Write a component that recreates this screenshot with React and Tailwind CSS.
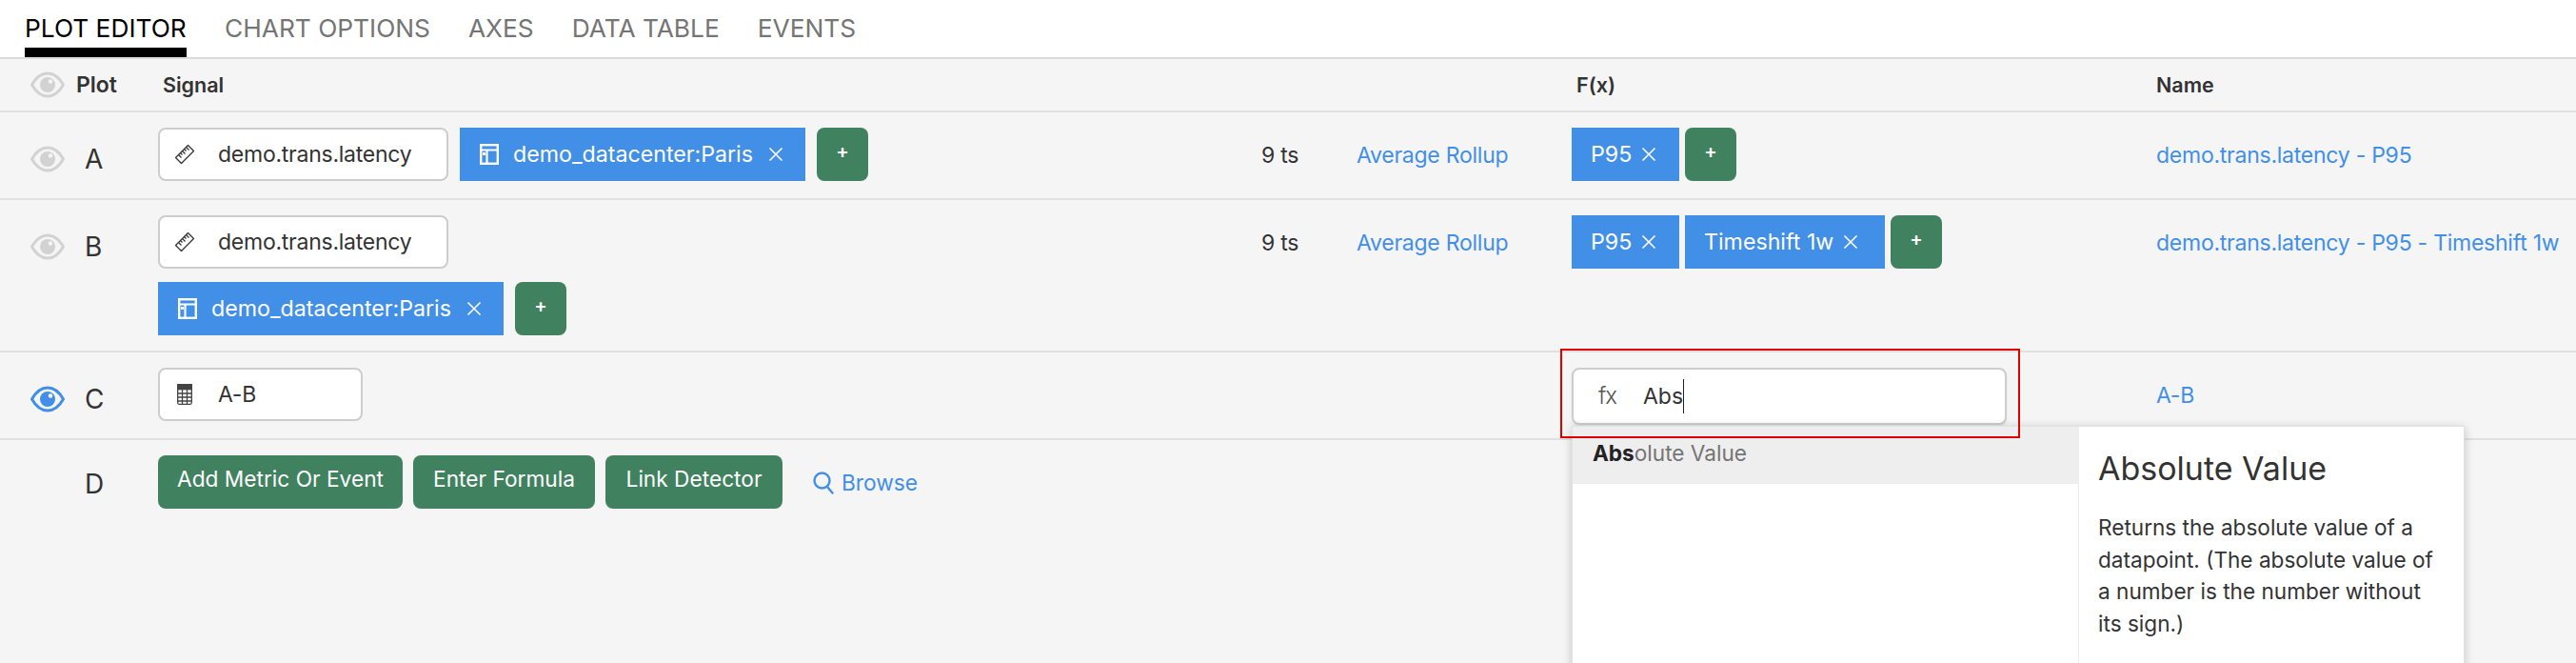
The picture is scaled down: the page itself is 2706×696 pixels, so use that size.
import React from "react";

const Eye = ({ on }) => (
  <svg width="36" height="28" viewBox="0 0 36 28" fill="none" className={on ? "text-[#428fe8]" : "text-[#d2d2d2]"}>
    <path d="M1.500 14C6 6 11.500 2 18 2s12 4 16.500 12C30 22 24.500 26 18 26S6 22 1.500 14Z" stroke="currentColor" strokeWidth="3" strokeLinejoin="round" />
    <circle cx="18" cy="14" r="8" fill="currentColor" />
    <circle cx="21" cy="10.500" r="2.200" fill={on ? "#ffffff" : "#f5f5f5"} />
  </svg>
);

const Ruler = () => (
  <svg width="22" height="22" viewBox="0 0 22 22" fill="none" stroke="#333" strokeWidth="1.300">
    <path d="M14.500 1.500 20.500 7.500 7.500 20.500 1.500 14.500Z" strokeLinejoin="round" />
    <path d="M12.500 3.500l3 3M10.500 5.500l2 2M8.500 7.500l3 3M6.500 9.500l2 2M4.500 11.500l3 3" />
  </svg>
);

const Calc = () => (
  <svg width="16" height="22" viewBox="0 0 16 22" fill="none" stroke="#444" strokeWidth="1.300">
    <rect x="0.700" y="0.700" width="14.600" height="20.600" rx="1.500" />
    <rect x="0.700" y="0.700" width="14.600" height="5" fill="#444" />
    <path d="M0.700 10h14.600M0.700 14h14.600M0.700 18h14.600M5.500 6v15M10.500 6v15" />
  </svg>
);

const TableIcon = () => (
  <svg width="20" height="22" viewBox="0 0 20 22" fill="none">
    <rect x="1.200" y="1.200" width="17.600" height="19.600" stroke="#fff" strokeWidth="2.400" />
    <path d="M1 6.500h18M7.500 6.500V21" stroke="#fff" strokeWidth="2.200" />
    <rect x="3" y="9" width="3" height="3" fill="#fff" />
  </svg>
);

const X = () => (
  <svg width="16" height="16" viewBox="0 0 16 16" className="shrink-0" stroke="#fff" strokeWidth="1.600" fill="none">
    <path d="M1.500 1.500l13 13M14.500 1.500l-13 13" />
  </svg>
);

const Plus = () => (
  <button className="h-14 w-[54px] shrink-0 rounded-[8px] bg-[#40825f] pb-1.5 text-[20px] font-semibold text-white">+</button>
);

const Tag = ({ children, icon, className = "" }) => (
  <div className={"flex h-14 shrink-0 items-center bg-[#428fe8] text-[23.200px] text-white " + className}>
    {icon}
    {children}
  </div>
);

const Box = ({ icon, children, className = "" }) => (
  <div className={"flex h-14 shrink-0 items-center rounded-[8px] border-2 border-[#cdcdcd] bg-white text-[23px] tracking-[-0.25px] text-[#333] " + className}>
    <span className="flex w-[61px] shrink-0 justify-center pl-1.5 pr-4">{icon}</span>
    {children}
  </div>
);

const Letter = ({ children, on }) => (
  <div className="flex h-14 items-center pl-8 pt-2.5">
    <Eye on={on} />
    <span className="ml-[21px] text-[28px] leading-none text-[#333]">{children}</span>
  </div>
);

const Cell = ({ children, className = "" }) => (
  <div className={"flex h-14 items-center whitespace-nowrap pt-0.5 text-[23px] tracking-[-0.25px] " + className}>{children}</div>
);

const Row = ({ children, className = "" }) => (
  <div className={"grid grid-cols-[166px_1159px_100px_226px_614px_1fr] border-b-2 border-[#e0e0e0] pt-4 " + className}>{children}</div>
);

export default function App() {
  const tabs = ["CHART OPTIONS", "AXES", "DATA TABLE", "EVENTS"];
  return (
    <div className="h-[696px] w-[2706px] overflow-hidden bg-[#f5f5f5] font-['Inter','Liberation_Sans',sans-serif]">
      <div className="flex h-[62px] gap-10 border-b-2 border-[#dcdcdc] bg-white pl-[26px] text-[26.300px] text-[#757575]">
        <div className="flex h-[60px] w-[170px] items-start whitespace-nowrap border-b-[10px] border-black pt-3.5 leading-8 text-black">PLOT EDITOR</div>
        {tabs.map((t) => (
          <div key={t} className="pt-3.5 leading-8">{t}</div>
        ))}
      </div>

      <div className="grid h-14 grid-cols-[166px_1485px_614px_1fr] items-center border-b-2 border-[#e0e0e0] text-[21.500px] font-semibold text-[#333]">
        <div className="flex items-center gap-3 pl-8">
          <Eye />
          <span className="text-[23px]">Plot</span>
        </div>
        <div className="pl-[5px]">Signal</div>
        <div className="pl-[5px]">F(x)</div>
        <div>Name</div>
      </div>

      <Row className="h-[92px]">
        <Letter>A</Letter>
        <div className="flex gap-3">
          <Box icon={<Ruler />} className="w-[305px]">demo.trans.latency</Box>
          <Tag icon={<span className="mr-[15px]"><TableIcon /></span>} className="w-[363px] pl-[21px]">
            demo_datacenter:Paris<span className="ml-4"><X /></span>
          </Tag>
          <Plus />
        </div>
        <Cell className="text-[#333]">9 ts</Cell>
        <Cell className="text-[#428fe8]">Average Rollup</Cell>
        <div className="flex gap-1.5">
          <Tag className="w-[113px] pl-5">P95<span className="ml-2.5"><X /></span></Tag>
          <Plus />
        </div>
        <Cell className="text-[#428fe8] tracking-[-0.5px]">demo.trans.latency - P95</Cell>
      </Row>

      <Row className="h-[160px]">
        <Letter>B</Letter>
        <div className="flex flex-col items-start gap-3.5">
          <Box icon={<Ruler />} className="w-[305px]">demo.trans.latency</Box>
          <div className="flex gap-3">
            <Tag icon={<span className="mr-[15px]"><TableIcon /></span>} className="w-[363px] pl-[21px]">
              demo_datacenter:Paris<span className="ml-4"><X /></span>
            </Tag>
            <Plus />
          </div>
        </div>
        <Cell className="text-[#333]">9 ts</Cell>
        <Cell className="text-[#428fe8]">Average Rollup</Cell>
        <div className="flex gap-1.5">
          <Tag className="w-[113px] pl-5">P95<span className="ml-2.5"><X /></span></Tag>
          <Tag className="w-[210px] pl-5">Timeshift 1w<span className="ml-2.5"><X /></span></Tag>
          <Plus />
        </div>
        <Cell className="text-[#428fe8] tracking-[-0.5px]">demo.trans.latency - P95 - Timeshift 1w</Cell>
      </Row>

      <Row className="h-[92px]">
        <Letter on>C</Letter>
        <Box icon={<Calc />} className="w-[215px]">A-B</Box>
        <div />
        <div />
        <div className="relative">
          <div className="flex h-[60px] w-[457px] items-center rounded-[8px] border-2 border-[#cdcdcd] bg-white text-[23px] text-[#333] shadow-[0_2px_3px_rgba(0,0,0,0.08)]">
            <span className="ml-[26px] w-[47px] text-[24px] font-light tracking-[-1px] text-[#555]">fx</span>
            <span>Abs</span>
            <span className="h-9 w-px bg-[#222]" />
          </div>
          <div className="pointer-events-none absolute top-[-20px] left-[-12px] z-20 h-[94px] w-[483px] border-2 border-[#e00000]" />
          <div className="absolute top-[61px] left-0 z-10 flex h-[400px] w-[938px] border border-[#e2e2e2] bg-white shadow-[0_2px_10px_rgba(0,0,0,0.2)]">
            <div className="w-[532px] border-r border-[#ececec]">
              <div className="flex h-[60px] items-center bg-[#eeeeee] pb-1 pl-[21px] text-[22.600px] text-[#757575]">
                <b className="font-bold text-[#222]">Abs</b>olute Value
              </div>
            </div>
            <div className="flex-1 pt-6 pl-5 pr-5 text-[#333]">
              <div className="text-[34px] leading-10">Absolute Value</div>
              <p className="mt-[25px] text-[22.600px] leading-[33.700px]">
                Returns the absolute value of a datapoint. (The absolute value of a number is the number without its sign.)
              </p>
            </div>
          </div>
        </div>
        <Cell className="text-[#428fe8]">A-B</Cell>
      </Row>

      <div className="grid grid-cols-[166px_1fr] pt-4">
        <div className="flex h-14 items-center pl-[89px] pt-1 text-[28px] leading-none text-[#333]">D</div>
        <div className="flex items-start gap-[11px] text-[22.700px] text-white">
          <button className="h-14 w-[257px] rounded-[8px] bg-[#40825f] pb-1.5">Add Metric Or Event</button>
          <button className="h-14 w-[191px] rounded-[8px] bg-[#40825f] pb-1.5">Enter Formula</button>
          <button className="h-14 w-[186px] rounded-[8px] bg-[#40825f] pb-1.5">Link Detector</button>
          <div className="ml-[21px] flex h-14 items-center gap-2 pt-0.5 text-[#428fe8]">
            <svg width="22" height="24" viewBox="0 0 22 24" fill="none" stroke="#428fe8" strokeWidth="2.400" strokeLinecap="round">
              <circle cx="9.500" cy="9.500" r="8" />
              <path d="M15 16l5.500 6.500" />
            </svg>
            <span>Browse</span>
          </div>
        </div>
      </div>
    </div>
  );
}
